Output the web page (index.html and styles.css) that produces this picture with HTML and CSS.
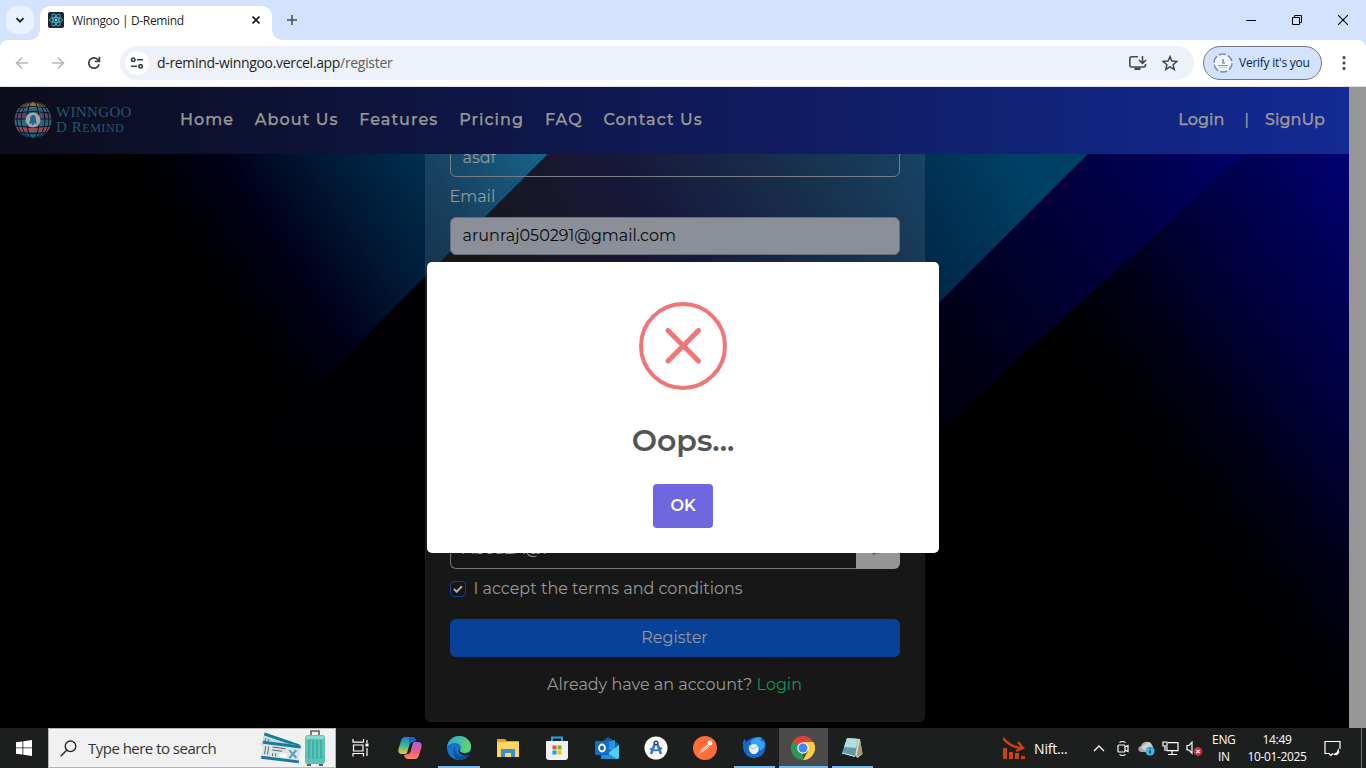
FILE: index.html
```html
<!DOCTYPE html>
<html lang="en">
<head>
<meta charset="utf-8">
<title>Winngoo | D-Remind</title>
<link rel="stylesheet" href="styles.css">
</head>
<body>
<div class="screen">
  <header class="tabstrip">
    <div class="tab-search"><svg width="10" height="10" viewBox="0 0 10 10"><path d="M1.5 3.2 5 6.7 8.5 3.2" fill="none" stroke="#1f1f1f" stroke-width="1.8"/></svg></div>
    <div class="tab">
      <svg class="favicon" width="16" height="16" viewBox="0 0 16 16"><rect width="16" height="16" rx="2" fill="#202327"/><g fill="none" stroke="#4db7cf" stroke-width=".9"><ellipse cx="8" cy="8" rx="6.6" ry="2.6"/><ellipse cx="8" cy="8" rx="6.6" ry="2.6" transform="rotate(60 8 8)"/><ellipse cx="8" cy="8" rx="6.6" ry="2.6" transform="rotate(120 8 8)"/></g><circle cx="8" cy="8" r="1.4" fill="#61dafb"/></svg>
      <span class="tab-title">Winngoo | D-Remind</span>
      <svg class="tab-close" width="8" height="8" viewBox="0 0 8 8"><path d="M.5.5l7 7M7.500.5l-7 7" stroke="#1f1f1f" stroke-width="1.6"/></svg>
    </div>
    <svg class="new-tab" width="10" height="10" viewBox="0 0 10 10"><path d="M5 0v10M0 5h10" stroke="#45484f" stroke-width="1.5"/></svg>
    <div class="window-buttons">
      <svg width="10" height="10" viewBox="0 0 10 10"><path d="M0 5.500h10" stroke="#000"/></svg>
      <svg width="10" height="10" viewBox="0 0 10 10"><path d="M.5 2.500h7v7h-7zM2.500 2.500v-2h7v7h-2" fill="none" stroke="#000"/></svg>
      <svg width="10" height="10" viewBox="0 0 10 10"><path d="M0 0l10 10M10 0L0 10" stroke="#000" stroke-width="1.100"/></svg>
    </div>
  </header>
  <div class="toolbar">
    <div class="nav-buttons">
      <svg width="16" height="16" viewBox="0 0 16 16"><path d="M14 8H3M8 2.500L2.500 8 8 13.500" fill="none" stroke="#b4b6b9" stroke-width="1.600"/></svg>
      <svg width="16" height="16" viewBox="0 0 16 16"><path d="M2 8h11M8 2.500L13.500 8 8 13.500" fill="none" stroke="#b4b6b9" stroke-width="1.600"/></svg>
      <svg width="16" height="16" viewBox="0 0 16 16"><path d="M13 9.200A5.200 5.200 0 1 1 11.800 4.500L13.200 6M13.400 1.700v4.600H8.800" fill="none" stroke="#3d4043" stroke-width="1.700"/></svg>
    </div>
    <div class="omnibox">
      <span class="site-info"><svg width="14" height="14" viewBox="0 0 14 14"><g fill="none" stroke="#3c3f43" stroke-width="1.600"><circle cx="3.200" cy="3.700" r="1.700"/><path d="M7 3.700h6M1 10.300h6"/><circle cx="10.600" cy="10.300" r="1.700"/></g></svg></span>
      <span class="url">d-remind-winngoo.vercel.app<span class="url-path">/register</span></span>
      <svg class="install" width="20" height="16" viewBox="0 0 20 16"><path d="M10 1.800H3.500Q1.800 1.800 1.800 3.500v7Q1.800 12 3.500 12h12.500Q17.500 12 17.500 10V9M14.500 1v7M11 5l3.500 3.300L18 5" fill="none" stroke="#45484c" stroke-width="1.600"/><path d="M6.500 12.500h6V15h-6z" fill="#45484c"/></svg>
      <svg class="star" width="16" height="16" viewBox="0 0 16 16"><path d="M8 1.600l1.900 4.500 4.900.4-3.700 3.200 1.100 4.700L8 11.900l-4.200 2.500 1.100-4.700L1.200 6.500l4.900-.4z" fill="none" stroke="#45484c" stroke-width="1.500"/></svg>
    </div>
    <div class="profile">
      <svg width="20" height="20" viewBox="0 0 20 20"><circle cx="10" cy="10" r="9.800" fill="#f3f7ff"/><circle cx="10" cy="10" r="9" fill="none" stroke="#6e8fc8" stroke-width="1.500" stroke-dasharray="7.600 1.800"/><path d="M9 7q2-1 1.500 1.200L9 10h3" stroke="#5d7190" fill="none"/><path d="M5 12.500h10" stroke="#7e8ba5" stroke-width=".9"/><path d="M6 14.200h8" stroke="#8ed0b8" stroke-width=".9"/></svg>
      <span>Verify it's you</span>
    </div>
    <svg class="menu-dots" width="4" height="16" viewBox="0 0 4 16"><g fill="#45484c"><circle cx="2" cy="2.600" r="1.600"/><circle cx="2" cy="8" r="1.600"/><circle cx="2" cy="13.400" r="1.600"/></g></svg>
  </div>

  <main class="page">
    <div class="viewport">
      <nav class="navbar">
        <div class="brand">
          <svg width="38" height="38" viewBox="0 0 38 38">
            <defs><clipPath id="globe"><circle cx="19" cy="19" r="18.500"/></clipPath></defs>
            <g clip-path="url(#globe)">
              <path d="M0 0h38v8H0z" fill="#99713a"/><path d="M0 7h38v5H0z" fill="#2a6478"/><path d="M0 12h38v6H0z" fill="#574661"/><path d="M0 18h38v8H0z" fill="#27677d"/><path d="M0 26h38v5H0z" fill="#954b4e"/><path d="M0 31h38v7H0z" fill="#285e74"/>
              <g fill="none" stroke="#0c1027" stroke-width="1"><ellipse cx="19" cy="19" rx="6" ry="19"/><ellipse cx="19" cy="19" rx="12" ry="18.500"/><ellipse cx="19" cy="19" rx="16" ry="18.500"/><path d="M0 7q19-3 38 0M0 12q19-3 38 0M0 18h38M0 25q19 3 38 0M0 31q19 3 38 0"/></g>
            </g>
            <circle cx="19" cy="19" r="7.500" fill="#a3a5aa"/><path d="M14.500 22.500q1.700-1 1.700-5 0-3.500 2.800-3.500t2.800 3.500q0 4 1.700 5z" fill="#24628f"/><path d="M18 22.500h2v1.500h-2z" fill="#24628f"/>
          </svg>
          <div class="brand-name"><span class="brand-top">WINNGOO</span><span class="brand-bottom">D R<small>EMIND</small></span></div>
        </div>
        <div class="links"><a>Home</a><a>About Us</a><a>Features</a><a>Pricing</a><a>FAQ</a><a>Contact Us</a></div>
        <div class="account"><a>Login</a><i>|</i><a>SignUp</a></div>
      </nav>
      <section class="hero">
        <svg class="backdrop" viewBox="0 154 1349 574" preserveAspectRatio="none">
          <defs>
            <linearGradient id="g1" gradientUnits="userSpaceOnUse" x1="105" y1="154" x2="410" y2="-51"><stop offset="0" stop-color="#000"/><stop offset=".08" stop-color="#000004"/><stop offset=".26" stop-color="#00001a"/><stop offset=".44" stop-color="#001530"/><stop offset=".72" stop-color="#003050"/><stop offset="1" stop-color="#005580"/></linearGradient>
            <linearGradient id="g2" gradientUnits="userSpaceOnUse" x1="520" y1="330" x2="965" y2="70"><stop offset="0" stop-color="#000004"/><stop offset=".32" stop-color="#000026"/><stop offset=".65" stop-color="#001f3e"/><stop offset="1" stop-color="#004066"/></linearGradient>
            <linearGradient id="g3" gradientUnits="userSpaceOnUse" x1="900" y1="420" x2="1252" y2="169"><stop offset="0" stop-color="#000008"/><stop offset=".25" stop-color="#00001a"/><stop offset=".7" stop-color="#000046"/><stop offset="1" stop-color="#000068"/></linearGradient>
            <linearGradient id="g4" gradientUnits="userSpaceOnUse" x1="1150" y1="500" x2="1445" y2="289"><stop offset="0" stop-color="#000"/><stop offset=".15" stop-color="#000006"/><stop offset=".35" stop-color="#00001e"/><stop offset=".6" stop-color="#000042"/><stop offset="1" stop-color="#000072"/></linearGradient>
          </defs>
          <path d="M0 154h1349v574H0z" fill="#000"/>
          <path d="M0 154h548L0 702z" fill="url(#g1)"/>
          <path d="M548 154h540L800 442H260z" fill="url(#g2)"/>
          <path d="M1088 154h157L925 444V317z" fill="url(#g3)"/>
          <path d="M1245 154h104v574H925V444z" fill="url(#g4)"/>
        </svg>
        <div class="card">
          <div class="field field-name">asdf</div>
          <label class="label">Email</label>
          <div class="field field-email"><span>arunraj050291@gmail.com</span></div>
          <div class="password"><div class="field-password">Abcd2A@1</div><div class="eye"><svg width="16" height="14" viewBox="0 0 16 14"><path d="M5 3a4 4 0 1 1 3 7q-3-1-5 1.500M3 11.500l4-5" fill="none" stroke="#084298" stroke-width="1.200"/></svg></div></div>
          <div class="accept"><span class="check"><svg width="10" height="8" viewBox="0 0 10 8"><path d="M1 4l2.700 2.700L9 1.300" fill="none" stroke="#aaa" stroke-width="2"/></svg></span><span class="accept-text">I accept the terms and conditions</span></div>
          <div class="register"><span>Register</span></div>
          <p class="already"><span>Already have an account?</span> <a>Login</a></p>
        </div>
      </section>
    </div>
    <div class="scrollbar"></div>
    <div class="modal">
      <svg width="88" height="88" viewBox="0 0 88 88"><circle cx="44" cy="44" r="42" fill="none" stroke="#f27474" stroke-width="4"/><path d="M29 28.500l30.500 30.500M59.500 28.500L29 59" stroke="#f27474" stroke-width="5" stroke-linecap="round"/></svg>
      <h2>Oops...</h2>
      <button>OK</button>
    </div>
  </main>

  <footer class="taskbar">
    <div class="start"><svg width="16" height="16" viewBox="0 0 16 16"><path d="M0 2.300L6.500 1.400v6.100H0zM7.300 1.300L16 0v7.500H7.300zM0 8.300h6.500v6.200L0 13.700zM7.300 8.300H16V16l-8.700-1.300z" fill="#fff"/></svg></div>
    <div class="search">
      <svg width="17" height="17" viewBox="0 0 17 17"><circle cx="10.500" cy="6.300" r="5.300" fill="none" stroke="#222" stroke-width="1.300"/><path d="M6.700 10.200L.7 16.300" stroke="#222" stroke-width="1.400"/></svg>
      <span>Type here to search</span>
      <svg class="travel" width="66" height="36" viewBox="0 0 66 36">
        <g transform="rotate(19 6 5)"><rect x="4" y="3" width="37" height="13" fill="#c9dade"/><path d="M4 3h37v3H4z" fill="#187d9b"/><path d="M7 8v6M10 8v6" stroke="#58718b"/></g>
        <g transform="rotate(7 20 22)"><rect x="2" y="13" width="38" height="18" fill="#dce4e6"/><path d="M2 13h38v3H2zM2 28h38v3H2z" fill="#147c9f"/><path d="M5 18v8M8 18v8M12 18h13M12 21h10M13 24v3M16 24v3" stroke="#5b6378" fill="none"/><path d="M20 23h7v4h-7z" fill="#fff"/><path d="M29 19l8 7M36 18l-6 9" stroke="#5aa3cb" stroke-width="2.200"/></g>
        <path d="M51 6V1h8v5" fill="none" stroke="#595863" stroke-width="1.600"/><rect x="45" y="5" width="20" height="29" rx="3" fill="#5cc4b7"/><path d="M49 10v19M53 10v19M57 10v19M61 10v19" stroke="#3ba49a" stroke-width="1.300"/><path d="M46 6h18v3H46z" fill="#86dbcc"/><path d="M47 34h4v2h-4zM59 34h4v2h-4z" fill="#535d70"/>
      </svg>
    </div>
    <div class="apps">
      <div class="app"><svg width="18" height="18" viewBox="0 0 18 18"><g fill="none" stroke="#fff" stroke-width="1.200"><path d="M1 0v3.200h10.500V0M1.500 6h9.500v6H1.500zM1 17.500v-3h10.500v3M15 1v3M15 9v8"/></g><path d="M13.500 4.500h3v3h-3z" fill="#fff"/></svg></div>
      <div class="app"><svg width="24" height="24" viewBox="0 0 24 24"><defs><linearGradient id="ca" x2="0" y2="1"><stop stop-color="#1d7ce4"/><stop offset=".5" stop-color="#35b993"/><stop offset="1" stop-color="#f2cb24"/></linearGradient><linearGradient id="cb" x2="0" y2="1"><stop stop-color="#a461e8"/><stop offset=".5" stop-color="#e8598d"/><stop offset="1" stop-color="#ff8a52"/></linearGradient></defs><path d="M7 1h7q3 0 4 4l-4 1q-2 0-3 4l-2 7q-.5 1-2 1H3q-4-1-2-7l2-6q1-4 4-4z" fill="url(#ca)"/><path d="M17 23h-7q-3 0-4-4l4-1q2 0 3-4l2-7q.5-1 2-1h4q4 1 2 7l-2 6q-1 4-4 4z" fill="url(#cb)"/><path d="M11 1h4q2 0 3 4h-4q-2 0-3 3z" fill="#195fbd"/></svg></div>
      <div class="app open"><svg width="24" height="24" viewBox="0 0 24 24"><defs><linearGradient id="ed" y2=".3"><stop stop-color="#269ee4"/><stop offset="1" stop-color="#62d66a"/></linearGradient></defs><circle cx="12" cy="12" r="12" fill="#1372c9"/><path d="M0 11C1 4 6 0 12 0c7 0 12 5 12 10 0 5-3 7-7 7-3 0-4-1-4-2 0-1 1-2 1-3 0-3-3-5-6-5-4 0-7 2-8 4z" fill="url(#ed)"/><path d="M8 10c-1 5 2 9 6 10 4 0 7-1 9-3-2 5-7 7-11 7C7 23 5 17 8 10z" fill="#0d4e9c"/><path d="M12 13q1 4 6 4.500 3 0 6-2l-.5 2q-5 4-10 .5-2.500-2-1.500-5z" fill="#1d1e20"/></svg></div>
      <div class="app"><svg width="22" height="20" viewBox="0 0 22 20"><path d="M0 1h8l2 2h12v16H0z" fill="#dfa12c"/><path d="M0 4h22v15H0z" fill="#ffd564"/><path d="M4 11h14v8h-4v-4H8v4H4z" fill="#358fd0"/></svg></div>
      <div class="app"><svg width="24" height="24" viewBox="0 0 24 24"><path d="M7 6V1.500h10V6" fill="none" stroke="#22a4e5" stroke-width="2"/><path d="M1 5h22v16q0 3-3 3H4q-3 0-3-3z" fill="#eff1f3"/><path d="M7.500 9.500h4v4h-4z" fill="#f25022"/><path d="M12.500 9.500h4v4h-4z" fill="#7fba00"/><path d="M7.500 14.500h4v4h-4z" fill="#00a4ef"/><path d="M12.500 14.500h4v4h-4z" fill="#ffb900"/></svg></div>
      <div class="app"><svg width="24" height="24" viewBox="0 0 24 24"><path d="M5 7l8-6 11 7v15H6z" fill="#155da9"/><path d="M7 7l13-3v10H7z" fill="#2e91df"/><path d="M6 22l18-13v12q0 2-2 2H7z" fill="#52cdf2"/><path d="M6 13l16 10H7z" fill="#238fd9"/><rect y="5" width="14" height="14" rx="1" fill="#106cc5"/><ellipse cx="7" cy="12" rx="3" ry="3.500" fill="none" stroke="#fff" stroke-width="1.800"/></svg></div>
      <div class="app"><svg width="24" height="24" viewBox="0 0 24 24"><circle cx="12" cy="12" r="11.500" fill="#fafafa"/><path d="M11.500 6L7 18M12.500 6L17 18" stroke="#3476dd" stroke-width="2.600"/><path d="M6 12.500q6 4 12-.5" fill="none" stroke="#3476dd" stroke-width="1.800"/><path d="M15 10l3 2-2 3z" fill="#29935a"/><circle cx="12" cy="7" r="1.800" fill="#f5f5f5" stroke="#34475e" stroke-width="1.400"/></svg></div>
      <div class="app"><svg width="24" height="24" viewBox="0 0 24 24"><circle cx="12" cy="12" r="12" fill="#ff6c37"/><path d="M5.500 18.500l3-5 6-5 2 2-6 5z" fill="#ffe6dd"/><circle cx="17" cy="7" r="2.400" fill="#fff"/><path d="M7 17l8-7" stroke="#df633b" stroke-width=".7"/></svg></div>
      <div class="app open"><svg width="24" height="24" viewBox="0 0 24 24"><path d="M1 6q1-3 2-3l1 3Q8 2 14 1q5-1 7 2l2 2q2 9-3 14-6 5-13 2-7-4-6-15z" fill="#1668cf"/><path d="M9 5Q14 0 20 2l-2 2 5 3q0 5-5 8 0-7-9-7z" fill="#35a4ee"/><path d="M7 10q5-4 9 0 2 4-1 7-4 3-7-1-2-3-1-6z" fill="#e6f5ff"/><path d="M7 10l4 3 5-3" fill="none" stroke="#91b9df"/></svg></div>
      <div class="app open active"><svg width="24" height="24" viewBox="0 0 24 24"><path d="M12 12L1.600 6A12 12 0 0 1 22.400 6z" fill="#db4437"/><path d="M12 12v12A12 12 0 0 1 1.600 6z" fill="#279b56"/><path d="M12 6h10.400A12 12 0 0 1 12 24l5.200-9z" fill="#ffcd40"/><circle cx="12" cy="12" r="5.800" fill="#f4f4f4"/><circle cx="12" cy="12" r="4.500" fill="#4285f4"/></svg></div>
      <div class="app open"><svg width="24" height="24" viewBox="0 0 24 24"><path d="M8 2l12 1 2.500 15-5 4-5-5z" fill="#d4d7d3"/><path d="M20 4l2.500 14-6 3z" fill="#a8966a"/><path d="M7 2l11 1-3 18-13-4z" fill="#5f9ba4"/><path d="M7 2l11 1-2 9-12-1z" fill="#b2dcdd"/><path d="M2 17l13 3.500" stroke="#d4eeee"/></svg></div>
    </div>
    <div class="news"><svg width="22" height="22" viewBox="0 0 22 22"><path d="M0 1q7 9 19 10M15 5l5 6-7 3" fill="none" stroke="#c9401b" stroke-width="2.400"/><path d="M0 11h4v11H0zM6 15h4v7H6zM12 16h4v6h-4zM18 19h4v3h-4z" fill="#c9401b"/></svg><span>Nift...</span></div>
    <div class="tray">
      <svg width="12" height="8" viewBox="0 0 12 8"><path d="M1 7l5-5 5 5" fill="none" stroke="#fff" stroke-width="1.300"/></svg>
      <svg class="meet" width="12" height="17" viewBox="0 0 12 17"><g fill="none" stroke="#fff" stroke-width="1.200"><rect x="1" y="5" width="7" height="7" rx="1"/><path d="M8 7l3-1.500v6L8 10M2.500 2.500q3-2 6 0M2.500 14.500q3 2 6 0"/></g></svg>
      <svg width="17" height="15" viewBox="0 0 17 15"><path d="M1 10q-2-4 2-5 2-5 7-4l5 4v6H3z" fill="#aaa"/><path d="M10 1q4 0 4 5l-7 4-4-4z" fill="#d1d1d1"/><circle cx="12" cy="10" r="4.600" fill="#48b5ed"/><path d="M12 9v3.500M12 6.800V8" stroke="#133" stroke-width="1.300"/></svg>
      <svg width="17" height="15" viewBox="0 0 17 15"><path d="M6 1.600h10v8H5V6M10 9.600V13M6 13.500h9M1 1h4v4H1zM3 5v5" fill="none" stroke="#fff" stroke-width="1.200"/></svg>
      <svg width="17" height="15" viewBox="0 0 17 15"><path d="M1 4.500h2L6 1.200v11L3 9H1z" fill="none" stroke="#fff" stroke-width="1.200"/><circle cx="12" cy="10.500" r="4.400" fill="#d42d35"/><path d="M10.300 8.800l3.400 3.400m0-3.400l-3.400 3.400" stroke="#fff" stroke-width="1.200"/></svg>
    </div>
    <div class="lang"><span>ENG</span><span>IN</span></div>
    <div class="clock"><span class="time">14:49</span><span>10-01-2025</span></div>
    <svg class="action" width="17" height="17" viewBox="0 0 17 17"><path d="M9 13.500L7 15.500 5 13.500H1v-12h15V9" fill="none" stroke="#fff" stroke-width="1.200"/><path d="M14 8q3 5-1 7-2 1-4-1 5-1 5-6z" fill="#fff"/></svg>
    <div class="peek"></div>
  </footer>
</div>
</body>
</html>
```

FILE: styles.css
```css
* { box-sizing: border-box; }
body { margin: 0; font-family: "Open Sans", sans-serif; background: #000; }
svg { display: block; flex: none; }
.screen { width: 1366px; height: 768px; display: flex; flex-direction: column; overflow: hidden; background: #d3e3fd; }

/* Browser frame */
.tabstrip { height: 40px; flex: none; display: flex; align-items: center; background: #d3e3fd; padding-left: 6px; }
.tab-search { width: 28px; height: 28px; border-radius: 10px; background: #eaf1fe; display: flex; align-items: center; justify-content: center; margin-right: 6px; }
.tab { width: 232px; height: 34px; margin-top: 6px; background: #fff; border-radius: 10px 10px 0 0; display: flex; align-items: center; padding: 0 12px 6px 8px; position: relative; }
.tab::before, .tab::after { content: ""; position: absolute; bottom: 0; width: 10px; height: 10px; }
.tab::before { left: -10px; background: radial-gradient(circle at 0 0, #d3e3fd 9.5px, #fff 10px); }
.tab::after { right: -10px; background: radial-gradient(circle at 100% 0, #d3e3fd 9.5px, #fff 10px); }
.tab-title { font-size: 12px; letter-spacing: -.36px; color: #1f1f1f; margin-left: 8px; flex: 1; white-space: nowrap; }
.new-tab { margin-left: 15px; }
.window-buttons { display: flex; gap: 36px; margin-left: auto; margin-right: 18px; }
.toolbar { height: 47px; flex: none; background: #fff; border-bottom: 1px solid #dfe1e5; border-radius: 8px 8px 0 0; display: flex; align-items: center; }
.nav-buttons { display: flex; gap: 20px; margin-left: 14px; }
.omnibox { width: 1074px; height: 34px; border-radius: 17px; background: #edf1fa; margin-left: 18px; display: flex; align-items: center; padding: 0 16px 0 5px; }
.site-info { width: 24px; height: 24px; border-radius: 50%; background: #fff; display: flex; align-items: center; justify-content: center; }
.url { font-size: 14px; letter-spacing: -.32px; color: #1f1f1f; margin-left: 8px; padding-bottom: 1px; flex: 1; }
.url-path { color: #5a5d61; }
.star { margin-left: 14px; }
.profile { width: 119px; height: 34px; margin-left: 9px; border: 1px solid #73777f; border-radius: 17px; background: #d3e3fd; display: flex; align-items: center; padding: 0 0 1px 9px; font-size: 12px; letter-spacing: -.25px; color: #041e49; white-space: nowrap; gap: 6px; }
.menu-dots { margin-left: 20px; }

/* Web page */
.page { height: 641px; flex: none; display: flex; position: relative; font-family: Montserrat, Inter, sans-serif; color: #999; }
.viewport { width: 1349px; display: flex; flex-direction: column; }
.scrollbar { width: 17px; background: #979797; }
.navbar { height: 67px; flex: none; background: linear-gradient(90deg, #0c0d1c, #101c60 58%, #132a94); display: flex; align-items: center; padding: 0 24px 2px 14px; }
.brand { width: 166px; display: flex; align-items: center; gap: 4px; color: #24566d; font-family: "Liberation Serif", serif; }
.brand-name { display: flex; flex-direction: column; line-height: 15px; padding-top: 1px; white-space: nowrap; }
.brand-top { font-size: 15px; letter-spacing: .35px; }
.brand-bottom { font-size: 15px; letter-spacing: .55px; }
.brand-bottom small { font-size: 12px; }
.links { display: flex; gap: 20.8px; font-size: 16px; font-weight: 500; letter-spacing: 1.05px; }
.links a, .account a { white-space: nowrap; -webkit-text-stroke: .25px #999; }
.account { display: flex; align-items: center; margin-left: auto; font-size: 16px; font-weight: 500; letter-spacing: 0; }
.account i { font-style: normal; margin: 0 16px 0 20px; }
.hero { height: 574px; position: relative; overflow: hidden; }
.backdrop { position: absolute; inset: 0; width: 1349px; height: 574px; }
.card { width: 500px; height: 615px; margin: -47px auto 0; position: relative; background: rgba(255,255,255,.09); border: 1px solid rgba(80,80,80,.13); border-radius: 6px; padding: 31px 24px; font-size: 16px; }
.field { height: 38px; border: 1px solid #777e86; border-radius: 6px; padding: 0 12px 1px; display: flex; align-items: center; }
.field-email { background: #8b8f97; color: #080a0d; border-color: #656e79; }
.label { display: block; height: 40px; line-height: 40px; }
.password { display: flex; height: 38px; margin-top: 276px; }
.field-password { flex: 1; border: 1px solid #777; border-right: 0; border-radius: 6px 0 0 6px; padding: 7px 12px; line-height: 20px; }
.eye { width: 44px; background: #959595; border-radius: 0 6px 6px 0; display: flex; align-items: center; justify-content: center; }
.accept { height: 40px; display: flex; align-items: center; gap: 8px; }
.accept-text { padding-bottom: 1px; }
.check { width: 16px; height: 16px; border: 1px solid #084298; border-radius: 4px; display: flex; align-items: center; justify-content: center; }
.register { height: 38px; margin-top: 10px; padding-bottom: 1px; background: #084298; border-radius: 6px; display: flex; align-items: center; justify-content: center; }
.already { text-align: center; margin: 17px 0 0; line-height: 22px; }
.already a { color: #0f9552; }
.modal { position: absolute; left: 427px; top: 175px; width: 512px; height: 291px; background: #fff; border-radius: 5px; display: flex; flex-direction: column; align-items: center; padding-top: 40px; }
.modal h2 { margin: 32px 0 0; font-size: 30px; line-height: 38px; font-weight: 600; color: #545454; }
.modal button { width: 60px; height: 44px; margin-top: 24px; padding: 0 0 1px; border: 0; border-radius: 4px; background: #7066e0; color: #fff; font: 600 16px Montserrat, Inter, sans-serif; }

/* Windows taskbar */
.taskbar { height: 40px; flex: none; display: flex; align-items: center; background: #1d1e1e; color: #fff; }
.start { width: 48px; display: flex; justify-content: center; }
.search { width: 288px; height: 40px; background: #f1f1f1; border: 1px solid #b5b5b5; color: #333; display: flex; align-items: center; padding: 0 9px 0 11px; font-size: 15px; letter-spacing: -.52px; }
.search span { margin-left: 11px; flex: 1; white-space: nowrap; }
.apps { display: flex; height: 40px; }
.app { width: 49.2px; display: flex; align-items: center; justify-content: center; position: relative; }
.open::after { content: ""; position: absolute; left: 4px; right: 4px; bottom: 0; height: 2px; background: #76b9ed; }
.active { background: #4a4a4a; }
.active::after { left: 0; right: 0; }
.news { display: flex; align-items: center; gap: 9px; margin-left: 126px; font-size: 14px; letter-spacing: -.2px; width: 90px; }
.tray { display: flex; align-items: center; gap: 7px; }
.meet { margin: 0 2px 0 5px; }
.lang, .clock { display: flex; flex-direction: column; align-items: center; font-size: 12px; line-height: 17px; letter-spacing: -.35px; }
.lang { margin-left: 9px; }
.clock { margin-left: 12px; }
.action { margin-left: 17px; }
.peek { margin-left: auto; width: 5px; height: 40px; border-left: 1px solid #747474; }
```
